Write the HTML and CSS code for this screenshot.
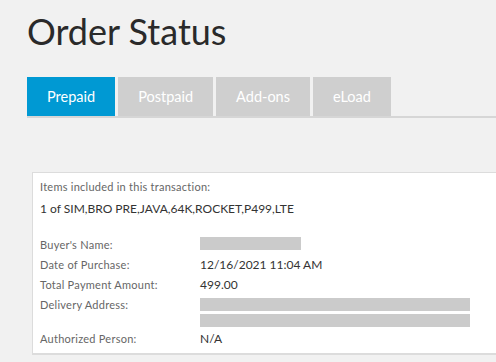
FILE: index.html
```html
<!DOCTYPE html>
<html>
<head>
	<title>Order Status</title>
	<link rel="stylesheet" href="styles.css">
</head>
<body>
	<div class="page">
		<h1 class="title">Order Status</h1>
		<div class="tabs">
			<div class="tab active">Prepaid</div>
			<div class="tab">Postpaid</div>
			<div class="tab">Add-ons</div>
			<div class="tab">eLoad</div>
		</div>
		<div class="card">
			<div class="items-label">Items included in this transaction:</div>
			<div class="items">1 of SIM,BRO PRE,JAVA,64K,ROCKET,P499,LTE</div>
			<div class="details">
				<div class="label">Buyer's Name:</div>
				<div class="value"><span class="blank short"></span></div>
				<div class="label">Date of Purchase:</div>
				<div class="value">12/16/2021 11:04 AM</div>
				<div class="label">Total Payment Amount:</div>
				<div class="value">499.00</div>
				<div class="label">Delivery Address:</div>
				<div class="value address"><span class="blank long"></span><span class="blank long"></span></div>
				<div class="label">Authorized Person:</div>
				<div class="value">N/A</div>
			</div>
		</div>
	</div>
</body>
</html>
```

FILE: styles.css
```css
html, body {
	margin: 0;
	background: #f1f1f1;
	overflow: hidden;
	font-family: Lato, "Noto Sans", sans-serif;
}

.page {
	padding: 0 0 0 27px;
}

.title {
	margin: 0;
	padding-top: 9px;
	font-size: 36px;
	font-weight: normal;
	line-height: 44px;
	color: #2a2a2a;
}

.tabs {
	display: flex;
	gap: 3px;
	margin-top: 24px;
	border-bottom: 2px solid #d6d6d6;
}

.tab {
	height: 39px;
	line-height: 39px;
	padding: 0 20px;
	background: #cfcfcf;
	color: #fff;
	font-size: 14.5px;
}

.tab.active {
	background: #0099d3;
}

.card {
	margin: 54px 0 0 5px;
	padding: 6px 7px 6px;
	background: #fff;
	border: 1px solid #dcdcdc;
	border-right: none;
	border-bottom-width: 2px;
}

.items-label {
	font-size: 11px;
	line-height: 16px;
	letter-spacing: 0.25px;
	color: #666;
}

.items {
	margin-top: 5px;
	font-size: 12px;
	line-height: 18px;
	color: #333;
}

.details {
	display: grid;
	grid-template-columns: 160px 1fr;
	row-gap: 4px;
	margin-top: 19px;
	font-size: 11px;
	line-height: 16px;
}

.label {
	letter-spacing: 0.25px;
	color: #666;
}

.value {
	color: #333;
	font-size: 12px;
	display: flex;
	flex-direction: column;
	gap: 3px;
}

.value.address {
	padding-top: 1px;
}

.blank {
	display: block;
	height: 13px;
	background: #cbcbcb;
}

.blank.short {
	width: 101px;
}

.blank.long {
	width: 270px;
}
```
